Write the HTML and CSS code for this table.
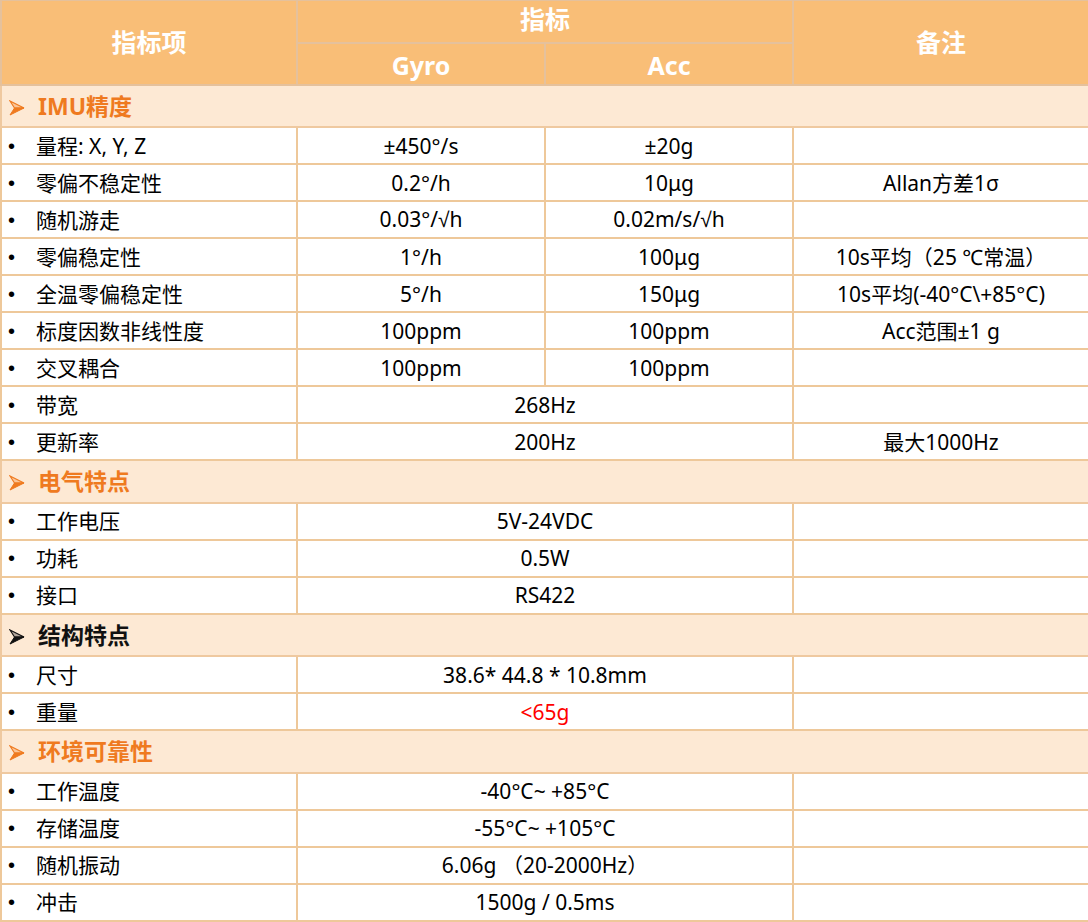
FILE: index.html
```html
<!DOCTYPE html>
<html lang="zh">
<head>
<meta charset="utf-8">
<title>IMU 指标</title>
<link rel="stylesheet" href="styles.css">
</head>
<body>
<table class="spec">
  <colgroup>
    <col class="c1"><col class="c2"><col class="c3"><col class="c4">
  </colgroup>
  <thead>
    <tr class="h1">
      <th rowspan="2">指标项</th>
      <th colspan="2" class="top">指标</th>
      <th rowspan="2">备注</th>
    </tr>
    <tr class="h2">
      <th>Gyro</th>
      <th>Acc</th>
    </tr>
  </thead>
  <tbody>
    <tr class="sec"><td colspan="4"><svg class="arr" viewBox="0 0 16 16"><path class="up" d="M1 1 L15 8 L5.5 8 Z"/><path class="dn" d="M5.5 8 L15 8 L1 15 Z"/></svg>IMU精度</td></tr>
    <tr><td class="item">量程: X, Y, Z</td><td>±450°/s</td><td>±20g</td><td></td></tr>
    <tr><td class="item">零偏不稳定性</td><td>0.2°/h</td><td>10μg</td><td>Allan方差1σ</td></tr>
    <tr><td class="item">随机游走</td><td>0.03°/<span class="sq">√</span>h</td><td>0.02m/s/<span class="sq">√</span>h</td><td></td></tr>
    <tr><td class="item">零偏稳定性</td><td>1°/h</td><td>100μg</td><td>10s平均（25 ℃常温）</td></tr>
    <tr><td class="item">全温零偏稳定性</td><td>5°/h</td><td>150μg</td><td>10s平均(-40°C\+85°C)</td></tr>
    <tr><td class="item">标度因数非线性度</td><td>100ppm</td><td>100ppm</td><td>Acc范围±1 g</td></tr>
    <tr><td class="item">交叉耦合</td><td>100ppm</td><td>100ppm</td><td></td></tr>
    <tr><td class="item">带宽</td><td colspan="2">268Hz</td><td></td></tr>
    <tr><td class="item">更新率</td><td colspan="2">200Hz</td><td>最大1000Hz</td></tr>
    <tr class="sec"><td colspan="4"><svg class="arr" viewBox="0 0 16 16"><path class="up" d="M1 1 L15 8 L5.5 8 Z"/><path class="dn" d="M5.5 8 L15 8 L1 15 Z"/></svg>电气特点</td></tr>
    <tr><td class="item">工作电压</td><td colspan="2">5V-24VDC</td><td></td></tr>
    <tr><td class="item">功耗</td><td colspan="2">0.5W</td><td></td></tr>
    <tr><td class="item">接口</td><td colspan="2">RS422</td><td></td></tr>
    <tr class="sec dark"><td colspan="4"><svg class="arr" viewBox="0 0 16 16"><path class="up" d="M1 1 L15 8 L5.5 8 Z"/><path class="dn" d="M5.5 8 L15 8 L1 15 Z"/></svg>结构特点</td></tr>
    <tr><td class="item">尺寸</td><td colspan="2">38.6* 44.8 * 10.8mm</td><td></td></tr>
    <tr><td class="item">重量</td><td colspan="2" class="red">&lt;65g</td><td></td></tr>
    <tr class="sec"><td colspan="4"><svg class="arr" viewBox="0 0 16 16"><path class="up" d="M1 1 L15 8 L5.5 8 Z"/><path class="dn" d="M5.5 8 L15 8 L1 15 Z"/></svg>环境可靠性</td></tr>
    <tr><td class="item">工作温度</td><td colspan="2">-40°C~ +85°C</td><td></td></tr>
    <tr><td class="item">存储温度</td><td colspan="2">-55°C~ +105°C</td><td></td></tr>
    <tr><td class="item">随机振动</td><td colspan="2">6.06g （20-2000Hz）</td><td></td></tr>
    <tr><td class="item">冲击</td><td colspan="2">1500g / 0.5ms</td><td></td></tr>
  </tbody>
</table>
</body>
</html>
```

FILE: styles.css
```css
html, body {
  margin: 0;
  padding: 0;
  background: #ffffff;
}

.spec {
  width: 1088px;
  table-layout: fixed;
  border-collapse: collapse;
  font-family: "Noto Sans", "Noto Sans CJK SC", sans-serif;
  font-size: 21px;
  color: #000000;
}

.c1 { width: 296px; }
.c2 { width: 248px; }
.c3 { width: 248px; }
.c4 { width: 296px; }

.spec th {
  background: #f9be77;
  color: #ffffff;
  font-weight: 700;
  font-size: 25px;
  line-height: 30px;
  border: 2px solid #e5c19c;
  padding: 0;
  text-align: center;
  vertical-align: middle;
}

.spec thead tr.h1 th { border-top: 1px solid #e5c19c; }
.spec tr.h1 th.top { vertical-align: top; padding-top: 3px; }
.spec tr.h2 th { padding-top: 2px; }
.spec tr.h1 { height: 42px; }
.spec tr.h2 { height: 42px; }

.spec td {
  border: 2px solid #eec89a;
  padding: 0;
  text-align: center;
  vertical-align: middle;
  height: 35px;
  line-height: 24px;
}

.spec td.item {
  text-align: left;
  padding-left: 34px;
  position: relative;
}

.spec td.item::before {
  content: "•";
  position: absolute;
  left: 6px;
  top: 50%;
  transform: translateY(-52%);
  font-family: "Liberation Sans", sans-serif;
  font-size: 20px;
}

.spec tr.sec td {
  background: #fde9d4;
  height: 40.5px;
  text-align: left;
  padding-left: 7px;
  font-weight: 700;
  font-size: 23px;
  color: #ef7a1f;
  border-color: #efc9a0;
}

.spec tr.sec.dark td { color: #111111; }

.arr {
  display: inline-block;
  width: 16px;
  height: 16px;
  margin-right: 13px;
  vertical-align: -1px;
}

.arr .up {
  fill: #fbc597;
  stroke: #ef7a1f;
  stroke-width: 1.2;
  stroke-linejoin: miter;
}

.arr .dn {
  fill: #ef7a1f;
  stroke: #ef7a1f;
  stroke-width: 1;
  stroke-linejoin: miter;
}

.dark .arr .up { fill: #b0a49a; stroke: #111111; }
.dark .arr .dn { fill: #111111; stroke: #111111; }

.sq { font-family: "Liberation Sans", sans-serif; }

.spec td.red { color: #ff0000; }
```
